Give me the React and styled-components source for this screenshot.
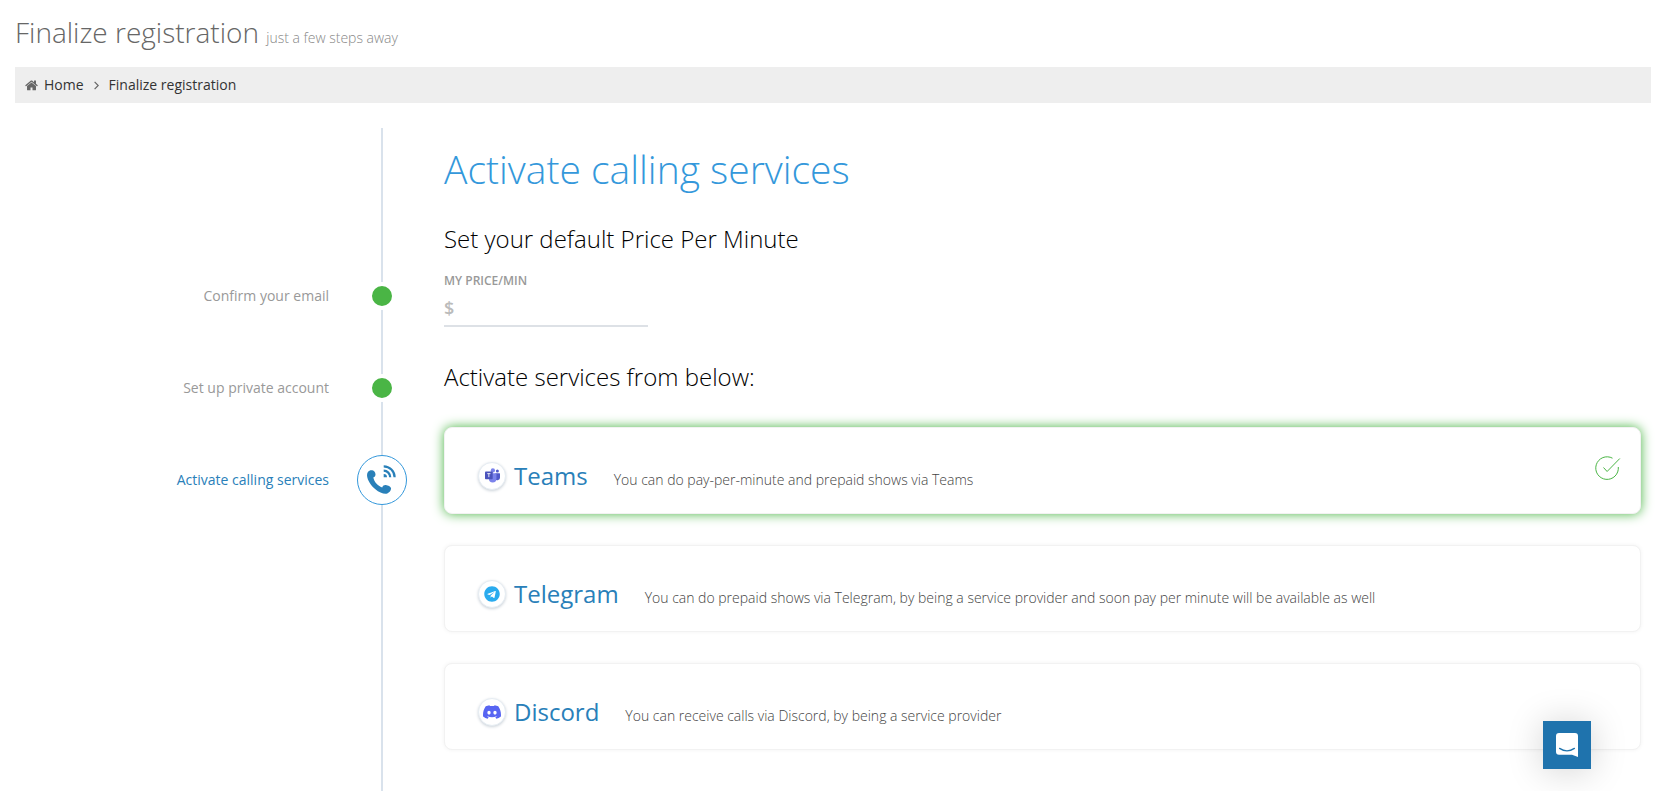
import React from 'react';
import styled, { createGlobalStyle } from 'styled-components';
import { SiDiscord } from 'react-icons/si';
import { FaTelegram } from 'react-icons/fa';

const GlobalStyle = createGlobalStyle`
  * {
    box-sizing: border-box;
  }
  body {
    margin: 0;
    background: #fff;
    color: #333;
    font-family: 'Open Sans', sans-serif;
    font-size: 14px;
    line-height: 20px;
  }
`;

const Page = styled.div`
  display: flex;
  flex-direction: column;
  min-height: 100vh;
  padding: 12px 5px 0 15px;
`;

const PageTitle = styled.h1`
  margin: 0 0 15px;
  font-size: 28px;
  font-weight: 300;
  line-height: 40px;
  color: #666;
`;

const PageSubtitle = styled.small`
  font-size: 14px;
  line-height: 20px;
  color: #888;
`;

const Breadcrumb = styled.nav`
  display: flex;
  align-items: center;
  gap: 10px;
  height: 36px;
  padding: 0 10px;
  background: #eee;
`;

const Crumb = styled.a`
  display: flex;
  align-items: center;
  gap: 6px;
  color: #333;
  text-decoration: none;
`;

const Main = styled.main`
  display: grid;
  grid-template-columns: 1fr 3fr;
  flex: 1;
  padding-top: 25px;
`;

const Stepper = styled.ol`
  position: relative;
  display: flex;
  flex-direction: column;
  gap: 42px;
  margin: 0;
  padding: 143px 17px 0 0;
  list-style: none;

  &::before {
    content: '';
    position: absolute;
    top: 0;
    bottom: 0;
    right: 41px;
    width: 2px;
    background: #d9e2ec;
  }
`;

const Step = styled.li`
  display: flex;
  align-items: center;
  justify-content: flex-end;
  gap: 28px;
  height: 50px;
  color: ${(props) => (props.$active ? '#2980b9' : '#999')};
`;

const Marker = styled.span`
  position: relative;
  display: flex;
  align-items: center;
  justify-content: center;
  width: 50px;
  height: 50px;
`;

const DoneDot = styled.span`
  width: 28px;
  height: 28px;
  border: 4px solid #fff;
  border-radius: 50%;
  background: #4ab545;
`;

const ActiveDot = styled.span`
  display: flex;
  align-items: center;
  justify-content: center;
  width: 50px;
  height: 50px;
  border: 1px solid #3498db;
  border-radius: 50%;
  background: #fff;
`;

const Content = styled.section`
  padding: 16px 10px 40px 20px;
`;

const Heading = styled.h2`
  margin: 0 0 25px;
  font-size: 39px;
  font-weight: 300;
  line-height: 50px;
  color: #3498db;
`;

const SubHeading = styled.h3`
  margin: 0;
  font-size: 24px;
  font-weight: 300;
  line-height: 40px;
  color: #000;
`;

const Field = styled.div`
  display: flex;
  flex-direction: column;
  width: 204px;
  margin: 12px 0 30px;
`;

const FieldLabel = styled.label`
  font-size: 12px;
  font-weight: 600;
  color: #999;
`;

const PriceBox = styled.div`
  display: flex;
  align-items: center;
  height: 36px;
  border-bottom: 2px solid #dde1e6;
  font-size: 18px;
  font-weight: 600;
  color: #bbb;
`;

const PriceInput = styled.input`
  flex: 1;
  min-width: 0;
  padding: 0 5px;
  border: 0;
  outline: 0;
  background: transparent;
  font: inherit;
  color: #333;
`;

const ServiceList = styled.div`
  display: flex;
  flex-direction: column;
  gap: 31px;
  margin-top: 30px;
`;

const ServiceCard = styled.article`
  display: flex;
  align-items: center;
  gap: 8px;
  height: 87px;
  padding: 10px 19px 0 33px;
  border: 1px solid #f2f2f2;
  border-radius: 8px;
  background: #fff;
  box-shadow: ${(props) => (props.$active ? '0 0 12px #4ab545' : '0 0 4px #f2f2f2')};
`;

const Badge = styled.span`
  display: flex;
  align-items: center;
  justify-content: center;
  width: 28px;
  height: 28px;
  border: 1px solid #e6edf3;
  border-radius: 50%;
  background: #fff;
  box-shadow: 0 1px 3px #ccd3da;
`;

const ServiceText = styled.div`
  display: flex;
  flex: 1;
  align-items: baseline;
  gap: 26px;
`;

const ServiceName = styled.a`
  font-size: 24px;
  line-height: 32px;
  color: #2980b9;
  text-decoration: none;
`;

const ServiceInfo = styled.p`
  margin: 0;
  font-weight: 300;
  color: #444;
`;

const Status = styled.span`
  display: flex;
  align-self: flex-start;
  padding-top: 18px;
`;

const ChatButton = styled.button`
  position: fixed;
  right: 65px;
  bottom: 22px;
  display: flex;
  align-items: center;
  justify-content: center;
  width: 48px;
  height: 48px;
  padding: 0;
  border: 0;
  background: #1f73ad;
  box-shadow: 0 2px 36px rgba(0, 0, 0, 0.18);
`;

const HomeIcon = () => (
  <svg width="13" height="13" viewBox="60 160 1670 1500" fill="#666" aria-hidden="true">
    <path d="M1472 992v480q0 26-19 45t-45 19h-384v-384h-256v384h-384q-26 0-45-19t-19-45v-480q0-1 .5-3t.5-3l575-474 575 474q1 2 1 6zm223-69l-62 74q-8 9-21 11h-3q-13 0-21-7l-692-577-692 577q-12 8-24 7-13-2-21-11l-62-74q-8-10-7-23.5t11-21.5l719-599q32-26 76-26t76 26l244 204v-195q0-14 9-23t23-9h192q14 0 23 9t9 23v408l219 182q10 8 11 21.5t-7 23.5z" />
  </svg>
);

const AngleIcon = () => (
  <svg width="5" height="9" viewBox="0 0 5 9" fill="none" stroke="#666" strokeWidth="1.2" aria-hidden="true">
    <path d="M.6 .8l3.6 3.7L.6 8.2" />
  </svg>
);

const PhoneIcon = () => (
  <svg width="30" height="30" viewBox="0 0 30 30" fill="#2980b9" aria-hidden="true">
    <path d="M.9 6.900C2 5.500 3.800 4.900 5.300 5.300c1.900.5 3.200 2.300 3.200 4.200 0 1.500-.9 2.500-2.200 3 .9 4.400 4.400 8.300 8.900 9.900.7-1.600 2-2.500 3.600-2.300 2.400.3 4.700 1.700 5.200 2.900.4 2.200-1.500 4.700-3.700 5.500-3 .9-8-.8-11.900-4.300C3.700 20.300.6 15.200.1 11.200-.1 9.500.1 8 .9 6.900z" />
    <path d="M16.700 12.300v-3.200a3.300 3.300 0 0 1 3.300 3.200z" />
    <path d="M16.700 5.700a6.500 6.500 0 0 1 6.500 6.500M16.700 1.400a10.900 10.900 0 0 1 10.900 10.900" fill="none" stroke="#2980b9" strokeWidth="2.200" />
  </svg>
);

const TeamsIcon = () => (
  <svg width="15" height="15" viewBox="0 0 16 16" aria-hidden="true">
    <circle cx="13.2" cy="3.300" r="1.600" fill="#5059c9" />
    <path d="M11 5.500h4.400q.6 0 .6.600v4.200a2.800 2.800 0 0 1-5 1.700z" fill="#5059c9" />
    <circle cx="8.400" cy="2.600" r="2.300" fill="#7b83eb" />
    <path d="M5 5.500h6.500q.7 0 .7.700v5.200a4 4 0 0 1-8 0V6.200z" fill="#7b83eb" />
    <rect x="0" y="3.700" width="8.200" height="8.200" rx=".8" fill="#4b53bc" />
    <path d="M2.400 6h3.400M4.100 6v3.800" stroke="#fff" strokeWidth=".9" />
  </svg>
);

const CheckIcon = () => (
  <svg width="26" height="25" viewBox="0 0 26 25" fill="none" stroke="#4ab545" role="img" aria-label="Activated">
    <path d="M17.500 2.200A11.300 11.300 0 1 0 23.300 11" />
    <path d="M8.500 11.500l3.600 4L24.800 2.500" />
  </svg>
);

const ChatIcon = () => (
  <svg width="22" height="24" viewBox="0 0 22 24" aria-hidden="true">
    <path d="M3 0h16a3 3 0 0 1 3 3v21l-6-2.300H3a3 3 0 0 1-3-3V3a3 3 0 0 1 3-3z" fill="#fff" />
    <path d="M3.600 15.400q7.400 5 14.800 0" fill="none" stroke="#1f73ad" strokeWidth="1.300" strokeLinecap="round" />
  </svg>
);

const steps = [
  { label: 'Confirm your email' },
  { label: 'Set up private account' },
  { label: 'Activate calling services', active: true },
];

const services = [
  {
    name: 'Teams',
    icon: <TeamsIcon />,
    info: 'You can do pay-per-minute and prepaid shows via Teams',
    active: true,
  },
  {
    name: 'Telegram',
    icon: <FaTelegram size={16} color="#2aabee" />,
    info: 'You can do prepaid shows via Telegram, by being a service provider and soon pay per minute will be available as well',
  },
  {
    name: 'Discord',
    icon: <SiDiscord size={18} color="#5865f2" />,
    info: 'You can receive calls via Discord, by being a service provider',
  },
];

const App = () => {
  return (
    <Page>
      <GlobalStyle />
      <PageTitle>
        Finalize registration <PageSubtitle>just a few steps away</PageSubtitle>
      </PageTitle>
      <Breadcrumb aria-label="Breadcrumb">
        <Crumb href="#home">
          <HomeIcon />
          Home
        </Crumb>
        <AngleIcon />
        <Crumb href="#registration">Finalize registration</Crumb>
      </Breadcrumb>
      <Main>
        <Stepper>
          {steps.map((step) => (
            <Step key={step.label} $active={step.active}>
              {step.label}
              <Marker>
                {step.active ? (
                  <ActiveDot>
                    <PhoneIcon />
                  </ActiveDot>
                ) : (
                  <DoneDot />
                )}
              </Marker>
            </Step>
          ))}
        </Stepper>
        <Content>
          <Heading>Activate calling services</Heading>
          <SubHeading>Set your default Price Per Minute</SubHeading>
          <Field>
            <FieldLabel htmlFor="price">MY PRICE/MIN</FieldLabel>
            <PriceBox>
              $
              <PriceInput id="price" type="text" inputMode="decimal" />
            </PriceBox>
          </Field>
          <SubHeading>Activate services from below:</SubHeading>
          <ServiceList>
            {services.map((service) => (
              <ServiceCard key={service.name} $active={service.active}>
                <Badge>{service.icon}</Badge>
                <ServiceText>
                  <ServiceName href={`#${service.name.toLowerCase()}`}>{service.name}</ServiceName>
                  <ServiceInfo>{service.info}</ServiceInfo>
                </ServiceText>
                {service.active && (
                  <Status>
                    <CheckIcon />
                  </Status>
                )}
              </ServiceCard>
            ))}
          </ServiceList>
        </Content>
      </Main>
      <ChatButton type="button" aria-label="Open chat">
        <ChatIcon />
      </ChatButton>
    </Page>
  );
};

export default App;
